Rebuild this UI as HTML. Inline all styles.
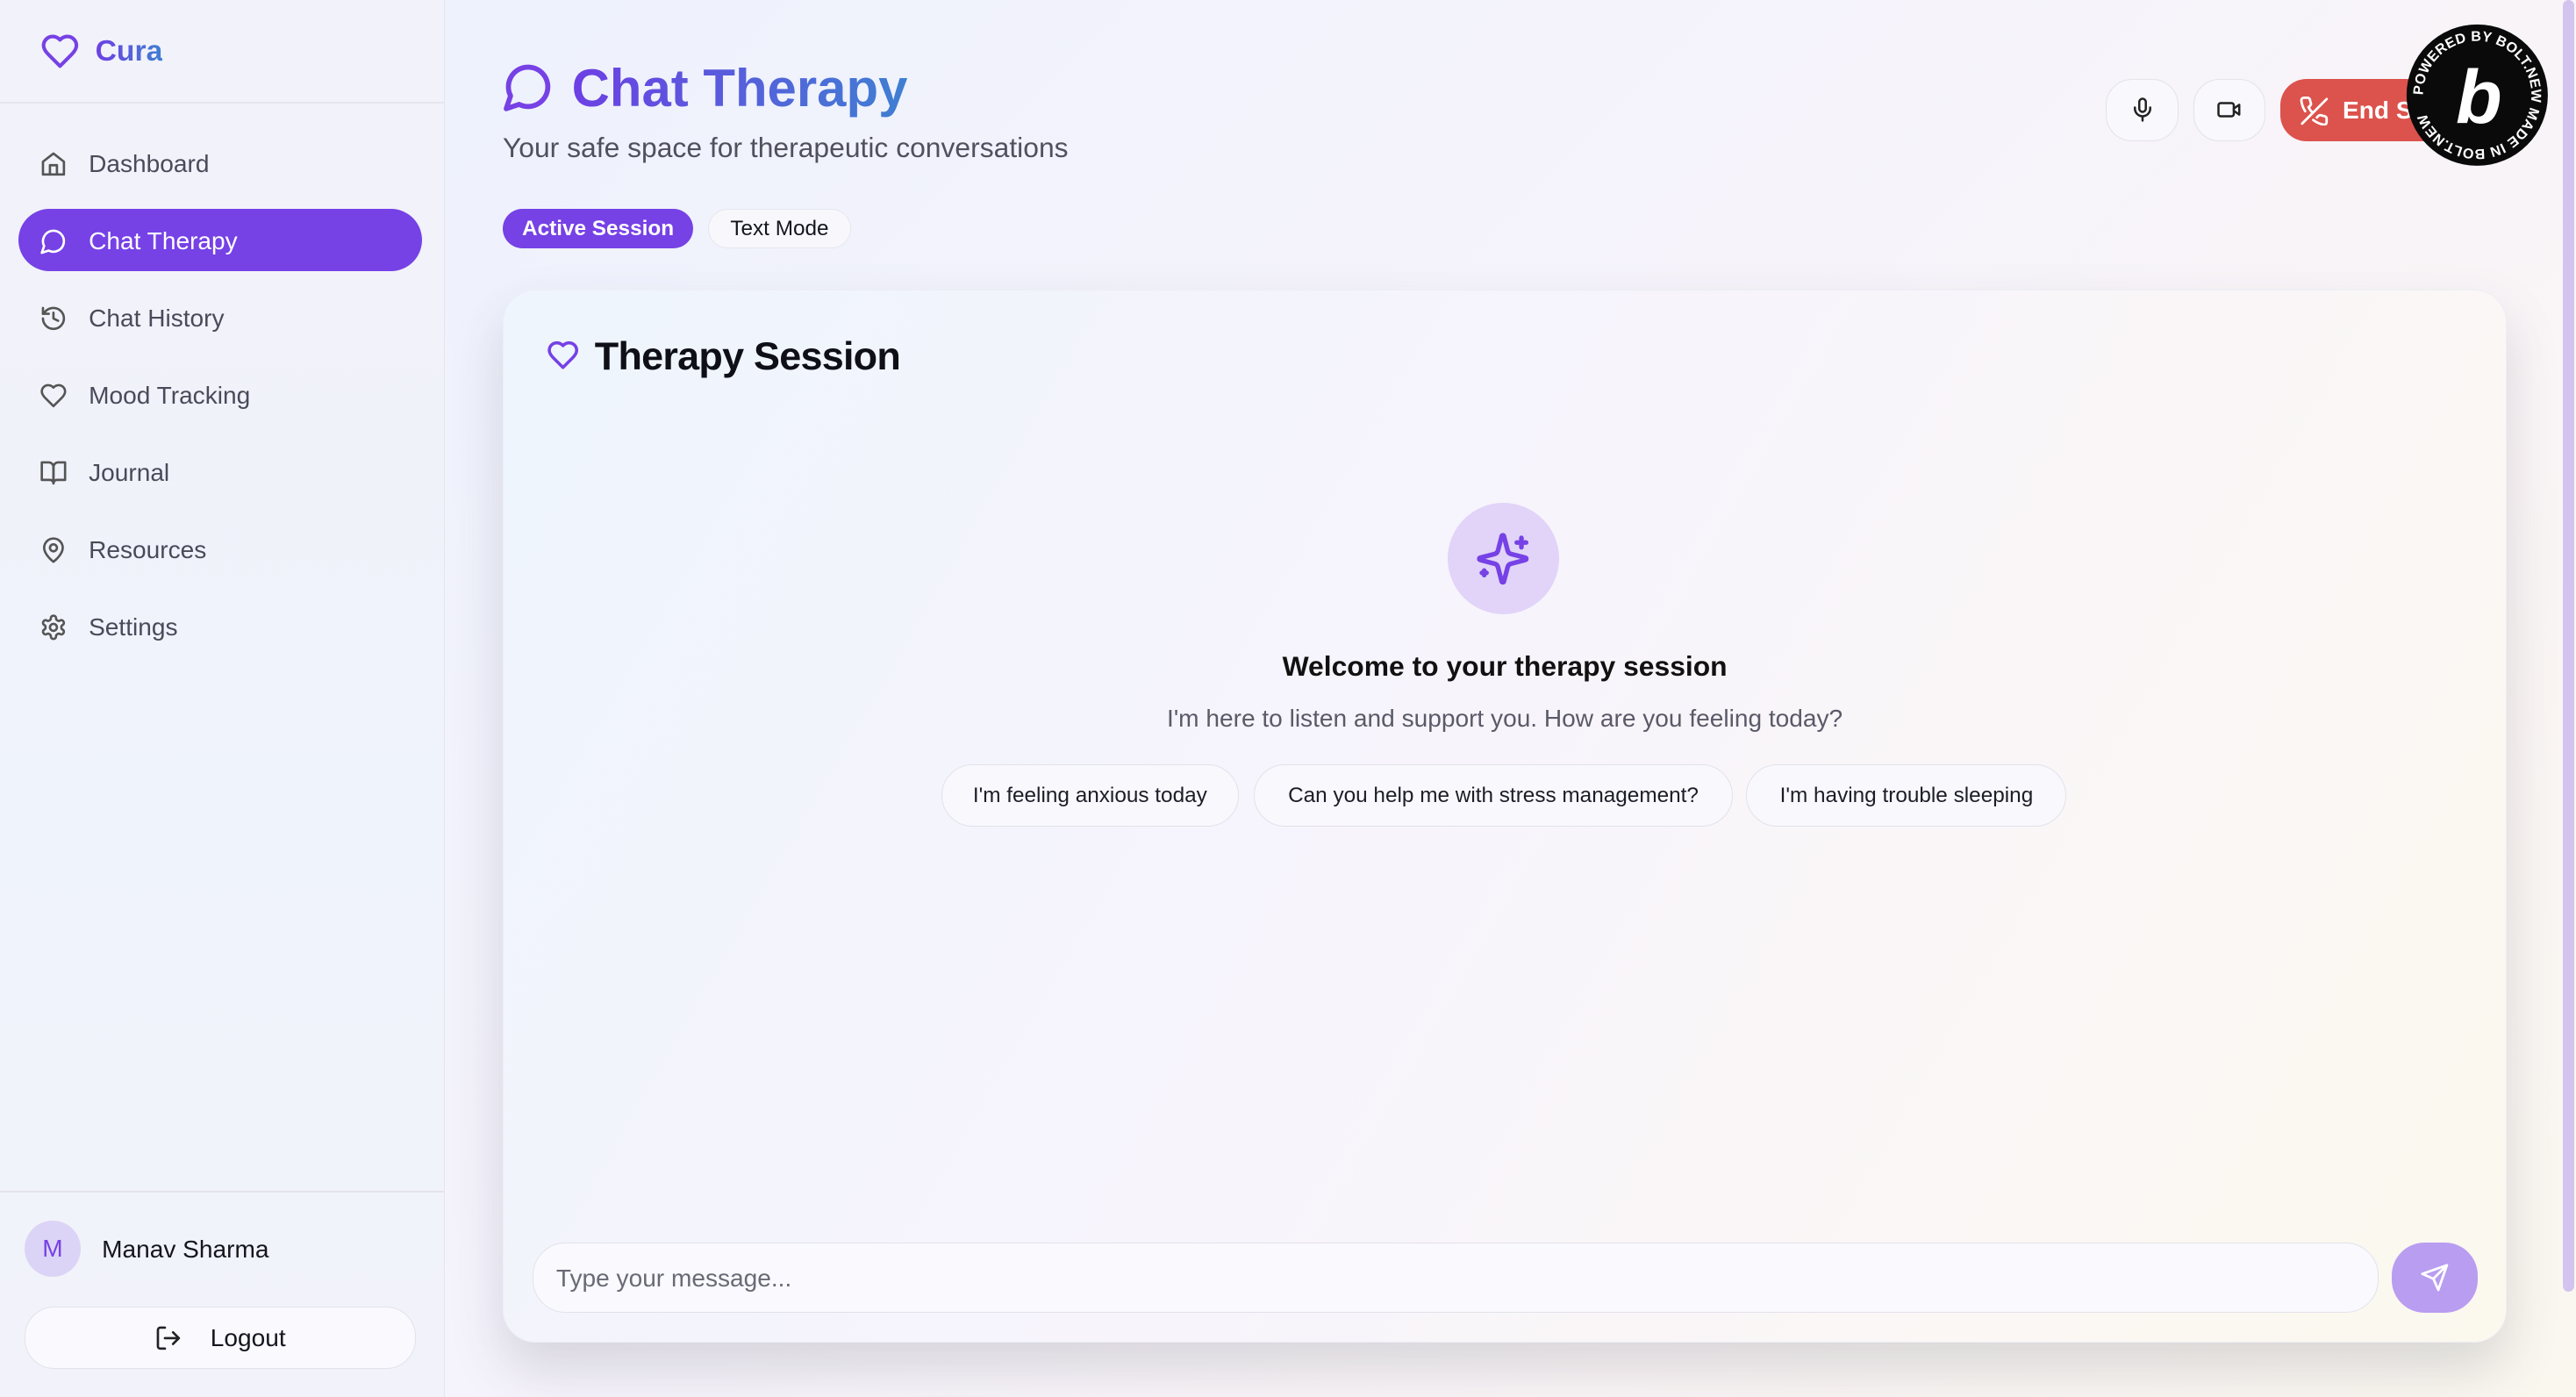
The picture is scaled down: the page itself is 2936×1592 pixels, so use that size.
<!DOCTYPE html>
<html><head><meta charset="utf-8"><style>
*{box-sizing:border-box;margin:0;padding:0}
html,body{width:2936px;height:1592px;overflow:hidden}
body{font-family:"Liberation Sans",sans-serif;background:#f6f4fb}
#z{zoom:1.8724;width:1568px;height:850.3px;position:relative;overflow:hidden;background:linear-gradient(135deg,#ebf2fd 0%,#f5f3fc 45%,#faf5f6 75%,#faf7ef 100%)}
.abs{position:absolute}
.side{left:0;top:0;width:271px;height:851px;background:linear-gradient(180deg,#f2f2fa,#eff3fb 60%,#f2f3fa);border-right:1px solid #e4e6ee}
.nav{position:absolute;left:11px;width:246px;height:38px;border-radius:19px;display:flex;align-items:center;padding-left:13px;padding-top:2px;font-size:15px;color:#4a4a5a}
.nav svg{width:17px;height:17px;margin-right:13px;fill:none;stroke:#555;stroke-width:2;stroke-linecap:round;stroke-linejoin:round}
.nav.act{background:#7641e5;color:#fff}
.nav.act svg{stroke:#fff}
.grad{background:linear-gradient(90deg,#6d3fe4,#3f7fd2);-webkit-background-clip:text;background-clip:text;color:transparent}
.badge{position:absolute;top:127px;height:24px;border-radius:12px;font-size:13px;font-weight:bold;display:flex;align-items:center;justify-content:center;padding-top:1px}
.ib{position:absolute;top:48px;width:44px;height:38px;border-radius:16px;border:1px solid #e3e3ea;background:#f8f8fd;display:flex;align-items:center;justify-content:center}
.ib svg{width:16px;height:16px;fill:none;stroke:#222;stroke-width:2;stroke-linecap:round;stroke-linejoin:round}
.chip{position:absolute;top:465px;height:38px;border-radius:19px;border:1px solid #e2e2ea;background:#f9f8fd;font-size:13px;color:#1d1d28;display:flex;align-items:center;justify-content:center;padding-top:1px}
</style></head><body><div id="z">
<div class="abs side">
 <svg class="abs" style="left:24px;top:19px" width="25" height="24" viewBox="0 0 24 24" fill="none" stroke="#7641e5" stroke-width="2.2" stroke-linejoin="round"><path d="M19 14c1.5-1.5 3-3.2 3-5.5A5.5 5.5 0 0 0 16.5 3c-1.8 0-3 .5-4.5 2-1.5-1.5-2.7-2-4.5-2A5.5 5.5 0 0 0 2 8.5c0 2.3 1.5 4 3 5.5l7 7z"/></svg>
 <div class="abs grad" style="left:58px;top:21px;font-size:18px;font-weight:bold">Cura</div>
 <div class="abs" style="left:0;top:62px;width:270px;height:1px;background:#e6e6ee"></div>
 <div class="nav" style="top:80px"><svg viewBox="0 0 24 24"><path d="M3 10l9-7 9 7v11H3z"/><path d="M9 21v-8h6v8"/></svg>Dashboard</div>
 <div class="nav act" style="top:127px"><svg viewBox="0 0 24 24"><path d="M7.9 20A9 9 0 1 0 4 16.1L2 22z"/></svg>Chat Therapy</div>
 <div class="nav" style="top:174px"><svg viewBox="0 0 24 24"><path d="M3 12a9 9 0 1 0 9-9 9.8 9.8 0 0 0-6.7 2.7L3 8"/><path d="M3 3v5h5"/><path d="M12 7v5l4 2"/></svg>Chat History</div>
 <div class="nav" style="top:221px"><svg viewBox="0 0 24 24"><path d="M19 14c1.5-1.5 3-3.2 3-5.5A5.5 5.5 0 0 0 16.5 3c-1.8 0-3 .5-4.5 2-1.5-1.5-2.7-2-4.5-2A5.5 5.5 0 0 0 2 8.5c0 2.3 1.5 4 3 5.5l7 7z"/></svg>Mood Tracking</div>
 <div class="nav" style="top:268px"><svg viewBox="0 0 24 24"><path d="M2 3h6a4 4 0 0 1 4 4v14a3 3 0 0 0-3-3H2z"/><path d="M22 3h-6a4 4 0 0 0-4 4v14a3 3 0 0 1 3-3h7z"/></svg>Journal</div>
 <div class="nav" style="top:315px"><svg viewBox="0 0 24 24"><path d="M20 10c0 6-8 12-8 12s-8-6-8-12a8 8 0 0 1 16 0z"/><circle cx="12" cy="10" r="3"/></svg>Resources</div>
 <div class="nav" style="top:362px"><svg viewBox="0 0 24 24"><circle cx="12" cy="12" r="3"/><path d="M12.2 2h-.4a2 2 0 0 0-2 2v.2a2 2 0 0 1-1 1.7l-.4.3a2 2 0 0 1-2 0l-.2-.1a2 2 0 0 0-2.7.7l-.2.4a2 2 0 0 0 .7 2.7l.2.1a2 2 0 0 1 1 1.7v.5a2 2 0 0 1-1 1.7l-.2.1a2 2 0 0 0-.7 2.7l.2.4a2 2 0 0 0 2.7.7l.2-.1a2 2 0 0 1 2 0l.4.3a2 2 0 0 1 1 1.7v.2a2 2 0 0 0 2 2h.4a2 2 0 0 0 2-2v-.2a2 2 0 0 1 1-1.7l.4-.3a2 2 0 0 1 2 0l.2.1a2 2 0 0 0 2.7-.7l.2-.4a2 2 0 0 0-.7-2.7l-.2-.1a2 2 0 0 1-1-1.7v-.5a2 2 0 0 1 1-1.7l.2-.1a2 2 0 0 0 .7-2.7l-.2-.4a2 2 0 0 0-2.7-.7l-.2.1a2 2 0 0 1-2 0l-.4-.3a2 2 0 0 1-1-1.7V4a2 2 0 0 0-2-2z"/></svg>Settings</div>
 <div class="abs" style="left:0;top:725px;width:270px;height:1px;background:#e4e4ec"></div>
 <div class="abs" style="left:15px;top:743px;width:34px;height:34px;border-radius:50%;background:#dcd4f6;color:#7641e5;font-size:15px;display:flex;align-items:center;justify-content:center">M</div>
 <div class="abs" style="left:62px;top:752px;font-size:15px;color:#15151f;font-weight:500">Manav Sharma</div>
 <div class="abs" style="left:15px;top:795px;width:238px;height:38px;border-radius:18px;border:1px solid #e2e2ea;background:#f9f9fe;display:flex;align-items:center;justify-content:center;font-size:15px;color:#15151f;padding-top:1px"><svg width="17" height="17" viewBox="0 0 24 24" fill="none" stroke="#222" stroke-width="2" stroke-linecap="round" stroke-linejoin="round" style="margin-right:17px"><path d="M9 21H5a2 2 0 0 1-2-2V5a2 2 0 0 1 2-2h4"/><path d="M16 17l5-5-5-5M21 12H9"/></svg>Logout</div>
</div>

<svg class="abs" style="left:305px;top:37px" width="33" height="32" viewBox="0 0 24 24" fill="none" stroke="#7641e5" stroke-width="2.3" stroke-linejoin="round"><path d="M7.9 20A9 9 0 1 0 4 16.1L2 22z"/></svg>
<div class="abs grad" style="left:348px;top:34px;font-size:32px;font-weight:bold;line-height:40px">Chat Therapy</div>
<div class="abs" style="left:306px;top:80px;font-size:17px;color:#50505e">Your safe space for therapeutic conversations</div>
<div class="badge" style="left:306px;width:116px;background:#7641e5;color:#fff">Active Session</div>
<div class="badge" style="left:431px;width:87px;border:1px solid #e6e6ee;background:#f8f8fc;color:#15151f;font-weight:500">Text Mode</div>

<div class="ib" style="left:1282px"><svg viewBox="0 0 24 24"><rect x="9" y="2" width="6" height="12" rx="3"/><path d="M19 10v1a7 7 0 0 1-14 0v-1M12 18v4"/></svg></div>
<div class="ib" style="left:1335px"><svg viewBox="0 0 24 24"><path d="M16 13l5 3.5V7.5L16 11"/><rect x="2" y="6" width="14" height="12" rx="2"/></svg></div>
<div class="abs" style="left:1388px;top:48px;width:130px;height:38px;border-radius:16px;background:#dc524c;color:#fff;font-size:15px;font-weight:bold;display:flex;align-items:center;padding-left:12px;padding-top:1px"><svg width="18" height="18" viewBox="0 0 24 24" fill="none" stroke="#fff" stroke-width="2" stroke-linecap="round" style="margin-right:8px"><path d="M10.7 13.3a16 16 0 0 1-3.4-4.6l1.3-1.3a2 2 0 0 0 .5-2.1 12.8 12.8 0 0 1-.7-2.8A2 2 0 0 0 6.4 1H3.4a2 2 0 0 0-2 2.2 19.8 19.8 0 0 0 3.1 8.7M22 2L2 22M14 17l1.3-1.3a2 2 0 0 1 2.1-.5c.9.3 1.8.6 2.8.7a2 2 0 0 1 1.7 2v3a2 2 0 0 1-2.2 2A19.8 19.8 0 0 1 11 19"/></svg>End Session</div>
<svg class="abs" style="left:1464px;top:14px" width="88" height="88" viewBox="0 0 88 88"><circle cx="44" cy="44" r="43" fill="#0a0a0a"/><defs><path id="cp" d="M44 44 m-33 0 a33 33 0 1 1 66 0 a33 33 0 1 1 -66 0"/></defs><text font-family="Liberation Sans" font-size="8.6" font-weight="bold" fill="#fff" letter-spacing="0.15"><textPath href="#cp">POWERED BY BOLT.NEW MADE IN BOLT.NEW</textPath></text><text x="45" y="61" text-anchor="middle" font-family="Liberation Sans" font-size="46" font-weight="bold" font-style="italic" fill="#fff">b</text></svg>

<div class="abs" style="left:306px;top:176px;width:1220px;height:641px;border-radius:20px;background:linear-gradient(120deg,#eef5fd 0%,#f7f4fc 45%,#fbf7f6 75%,#fbf8ee 100%);box-shadow:0 16px 32px rgba(60,60,80,.17);border:1px solid #eceef6"></div>
<svg class="abs" style="left:332px;top:206px" width="21" height="20" viewBox="0 0 24 24" fill="none" stroke="#7641e5" stroke-width="2.3" stroke-linejoin="round"><path d="M19 14c1.5-1.5 3-3.2 3-5.5A5.5 5.5 0 0 0 16.5 3c-1.8 0-3 .5-4.5 2-1.5-1.5-2.7-2-4.5-2A5.5 5.5 0 0 0 2 8.5c0 2.3 1.5 4 3 5.5l7 7z"/></svg>
<div class="abs" style="left:362px;top:203px;font-size:24px;font-weight:bold;color:#0f0f18;letter-spacing:-0.4px">Therapy Session</div>

<div class="abs" style="left:881px;top:306px;width:68px;height:68px;border-radius:50%;background:#e1d4f8;display:flex;align-items:center;justify-content:center"><svg width="34" height="34" viewBox="0 0 24 24" fill="none" stroke="#7641e5" stroke-width="2" stroke-linecap="round" stroke-linejoin="round"><path d="M9.9 15.5A2 2 0 0 0 8.5 14.1L2.4 12.5a.5.5 0 0 1 0-1l6.1-1.6A2 2 0 0 0 9.9 8.5l1.6-6.1a.5.5 0 0 1 1 0l1.6 6.1a2 2 0 0 0 1.4 1.4l6.1 1.6a.5.5 0 0 1 0 1l-6.1 1.6a2 2 0 0 0-1.4 1.4l-1.6 6.1a.5.5 0 0 1-1 0z"/><path d="M20 3v4M22 5h-4M4 17v2M5 18H3"/></svg></div>
<div class="abs" style="left:606px;width:620px;text-align:center;top:396px;font-size:17px;font-weight:bold;color:#111">Welcome to your therapy session</div>
<div class="abs" style="left:606px;width:620px;text-align:center;top:429px;font-size:15px;color:#5a5a68">I'm here to listen and support you. How are you feeling today?</div>
<div class="chip" style="left:573px;width:181px">I'm feeling anxious today</div>
<div class="chip" style="left:763px;width:292px">Can you help me with stress management?</div>
<div class="chip" style="left:1063px;width:195px">I'm having trouble sleeping</div>

<div class="abs" style="left:324px;top:756px;width:1124px;height:43px;border-radius:20px;border:1px solid #e2e2ea;background:#f9f9fe;font-size:15px;color:#6a6a76;display:flex;align-items:center;padding-left:14px;padding-top:1px">Type your message...</div>
<div class="abs" style="left:1456px;top:756px;width:52px;height:43px;border-radius:20px;background:#b99df0;display:flex;align-items:center;justify-content:center"><svg width="18" height="18" viewBox="0 0 24 24" fill="none" stroke="#fff" stroke-width="2" stroke-linejoin="round"><path d="M22 2L11 13M22 2l-7 20-4-9-9-4z"/></svg></div>
<div class="abs" style="left:1560px;top:0;width:7px;height:786px;border-radius:4px;background:#d3c4ef"></div>
</div></body></html>
